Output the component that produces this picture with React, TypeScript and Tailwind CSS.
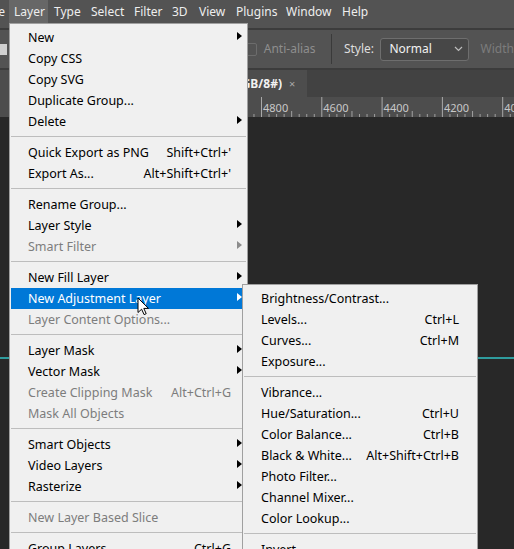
import React from "react";

type Row =
  | { sep: true }
  | {
      sep?: false;
      label: string;
      shortcut?: string;
      sub?: boolean;
      disabled?: boolean;
      active?: boolean;
    };

const TOP_MENU: { label: string; w: string }[] = [
  { label: "Image", w: "w-[45px]" },
  { label: "Layer", w: "w-[39px]" },
  { label: "Type", w: "w-[37px]" },
  { label: "Select", w: "w-[43px]" },
  { label: "Filter", w: "w-[38px]" },
  { label: "3D", w: "w-[27px]" },
  { label: "View", w: "w-[37px]" },
  { label: "Plugins", w: "w-[50px]" },
  { label: "Window", w: "w-[56px]" },
  { label: "Help", w: "w-[40px]" },
];

const LAYER_MENU: Row[] = [
  { label: "New", sub: true },
  { label: "Copy CSS" },
  { label: "Copy SVG" },
  { label: "Duplicate Group..." },
  { label: "Delete", sub: true },
  { sep: true },
  { label: "Quick Export as PNG", shortcut: "Shift+Ctrl+'" },
  { label: "Export As...", shortcut: "Alt+Shift+Ctrl+'" },
  { sep: true },
  { label: "Rename Group..." },
  { label: "Layer Style", sub: true },
  { label: "Smart Filter", sub: true, disabled: true },
  { sep: true },
  { label: "New Fill Layer", sub: true },
  { label: "New Adjustment Layer", sub: true, active: true },
  { label: "Layer Content Options...", disabled: true },
  { sep: true },
  { label: "Layer Mask", sub: true },
  { label: "Vector Mask", sub: true },
  { label: "Create Clipping Mask", shortcut: "Alt+Ctrl+G", disabled: true },
  { label: "Mask All Objects", disabled: true },
  { sep: true },
  { label: "Smart Objects", sub: true },
  { label: "Video Layers", sub: true },
  { label: "Rasterize", sub: true },
  { sep: true },
  { label: "New Layer Based Slice", disabled: true },
  { sep: true },
  { label: "Group Layers", shortcut: "Ctrl+G" },
];

const ADJUSTMENT_MENU: Row[] = [
  { label: "Brightness/Contrast..." },
  { label: "Levels...", shortcut: "Ctrl+L" },
  { label: "Curves...", shortcut: "Ctrl+M" },
  { label: "Exposure..." },
  { sep: true },
  { label: "Vibrance..." },
  { label: "Hue/Saturation...", shortcut: "Ctrl+U" },
  { label: "Color Balance...", shortcut: "Ctrl+B" },
  { label: "Black & White...", shortcut: "Alt+Shift+Ctrl+B" },
  { label: "Photo Filter..." },
  { label: "Channel Mixer..." },
  { label: "Color Lookup..." },
  { sep: true },
  { label: "Invert" },
];

function SubArrow({ color }: { color: string }) {
  return (
    <svg width="5" height="8" viewBox="0 0 5 8" className="mb-[5px]">
      <path d="M0 0L5 4L0 8Z" fill={color} />
    </svg>
  );
}

function MenuList({ rows, withArrows }: { rows: Row[]; withArrows: boolean }) {
  return (
    <>
      {rows.map((row, i) => {
        if (row.sep) {
          return (
            <div key={i} className="pt-[4px] pb-[5px]">
              <div className="h-px bg-[#bdbdbd]" />
            </div>
          );
        }
        const color = row.active ? "text-white" : row.disabled ? "text-[#7d7d7d]" : "text-black";
        return (
          <div
            key={i}
            className={`flex h-[21px] items-center pt-[2px] pl-[17px] ${withArrows ? "pr-[4px]" : "pr-[17px]"} ${
              row.active ? "bg-[#0078d7]" : ""
            } ${color}`}
          >
            <span className="flex-1 whitespace-nowrap">{row.label}</span>
            {row.shortcut && <span className="whitespace-nowrap">{row.shortcut}</span>}
            {withArrows && (
              <span className="flex w-[11px] justify-end">
                {row.sub && (
                  <SubArrow color={row.active ? "#ffffff" : row.disabled ? "#8c8c8c" : "#000000"} />
                )}
              </span>
            )}
          </div>
        );
      })}
    </>
  );
}

function Ruler() {
  const majors = [-4, -3, -2, -1, 0, 1, 2, 3, 4];
  return (
    <svg width="514" height="20" viewBox="0 0 514 20" className="block">
      {majors.map((k) => {
        const x = 261.5 + 60.3 * k;
        return (
          <g key={k}>
            <line x1={x} y1="0" x2={x} y2="20" stroke="#a8a8a8" strokeWidth="1" />
            <text
              x={x + 1.5}
              y="15"
              fill="#c8c8c8"
              fontSize="11"
              fontFamily="'Noto Sans', sans-serif"
            >
              {4800 - k * 200}
            </text>
            {[1, 2, 3, 4, 5, 6, 7].map((m) => (
              <line
                key={m}
                x1={x + m * 7.54}
                y1={m === 4 ? 14 : 17}
                x2={x + m * 7.54}
                y2="20"
                stroke="#a0a0a0"
                strokeWidth="1"
              />
            ))}
          </g>
        );
      })}
    </svg>
  );
}

export default function App() {
  return (
    <div className="relative h-[549px] w-[514px] overflow-hidden bg-[#282828] font-['Noto_Sans',sans-serif] text-[12px] leading-none">
      {/* menu bar */}
      <div className="flex h-[28px] items-start bg-[#535353] text-[#eeeeee]">
        <div className="-ml-[36px] flex h-[24px]">
          {TOP_MENU.map((m) => (
            <div
              key={m.label}
              className={`flex h-[24px] items-center ${m.w} ${
                m.label === "Image"
                  ? "justify-end pr-[4px]"
                  : m.label === "Layer"
                    ? "bg-[#676767] pl-[5px]"
                    : "pl-[6px]"
              }`}
            >
              {m.label}
            </div>
          ))}
        </div>
      </div>
      <div className="h-[2px] bg-[#3c3c3c]" />

      {/* options bar */}
      <div className="flex h-[38px] items-center bg-[#535353]">
        <div className="h-[11px] w-[7px] bg-[#d0d0d0]" />
        <div className="ml-[237px] h-[13px] w-[13px] rounded-[2px] border border-[#6c6c6c]" />
        <span className="ml-[7px] w-[68px] text-[#8e8e8e]">Anti-alias</span>
        <div className="h-[30px] w-px bg-[#3a3a3a]" />
        <span className="ml-[12px] w-[37px] text-[#dedede]">Style:</span>
        <div className="flex h-[23px] w-[89px] items-center justify-between rounded-[3px] border border-[#6e6e6e] bg-[#474747] pl-[8px] pr-[5px] text-[#f2f2f2]">
          <span>Normal</span>
          <svg width="9" height="6" viewBox="0 0 9 6">
            <path d="M1 1L4.5 4.5L8 1" fill="none" stroke="#bdbdbd" strokeWidth="1.2" />
          </svg>
        </div>
        <span className="ml-[12px] text-[#7c7c7c]">Width</span>
      </div>
      <div className="h-[2px] bg-[#3c3c3c]" />

      {/* document tabs */}
      <div className="flex h-[27px] bg-[#424242]">
        <div className="flex w-[307px] items-center bg-[#4d4d4d]">
          <div className="flex w-[282px] justify-end overflow-hidden whitespace-nowrap font-bold text-[#f2f2f2]">
            Guides (RGB/8#)
          </div>
          <span className="ml-[7px] text-[11px] text-[#a8a8a8]">×</span>
        </div>
      </div>

      {/* ruler */}
      <div className="bg-[#4d4d4d]">
        <Ruler />
      </div>

      {/* canvas with guide */}
      <div className="pt-[240px]">
        <div className="h-[2px] bg-[#2f9c9e]" />
      </div>

      {/* Layer menu */}
      <div className="absolute left-[9px] top-[23px] w-[239px] border border-[#a0a0a0] bg-[#f0f0f0] px-px py-[3px] text-[12.5px]">
        <MenuList rows={LAYER_MENU} withArrows />
      </div>

      {/* New Adjustment Layer submenu */}
      <div className="absolute left-[242px] top-[284px] w-[236px] border border-[#a0a0a0] bg-[#f0f0f0] px-px py-[3px] text-[12.5px]">
        <MenuList rows={ADJUSTMENT_MENU} withArrows={false} />
      </div>

      {/* mouse pointer */}
      <svg
        width="13"
        height="19"
        viewBox="0 0 13 19"
        className="absolute left-[137px] top-[297px]"
      >
        <path
          d="M1 1L1 15.5L4.6 12.2L7.1 17.6L9.2 16.7L6.8 11.4L11.5 11.4Z"
          fill="#ffffff"
          stroke="#000000"
          strokeWidth="1"
          strokeLinejoin="miter"
        />
      </svg>
    </div>
  );
}
